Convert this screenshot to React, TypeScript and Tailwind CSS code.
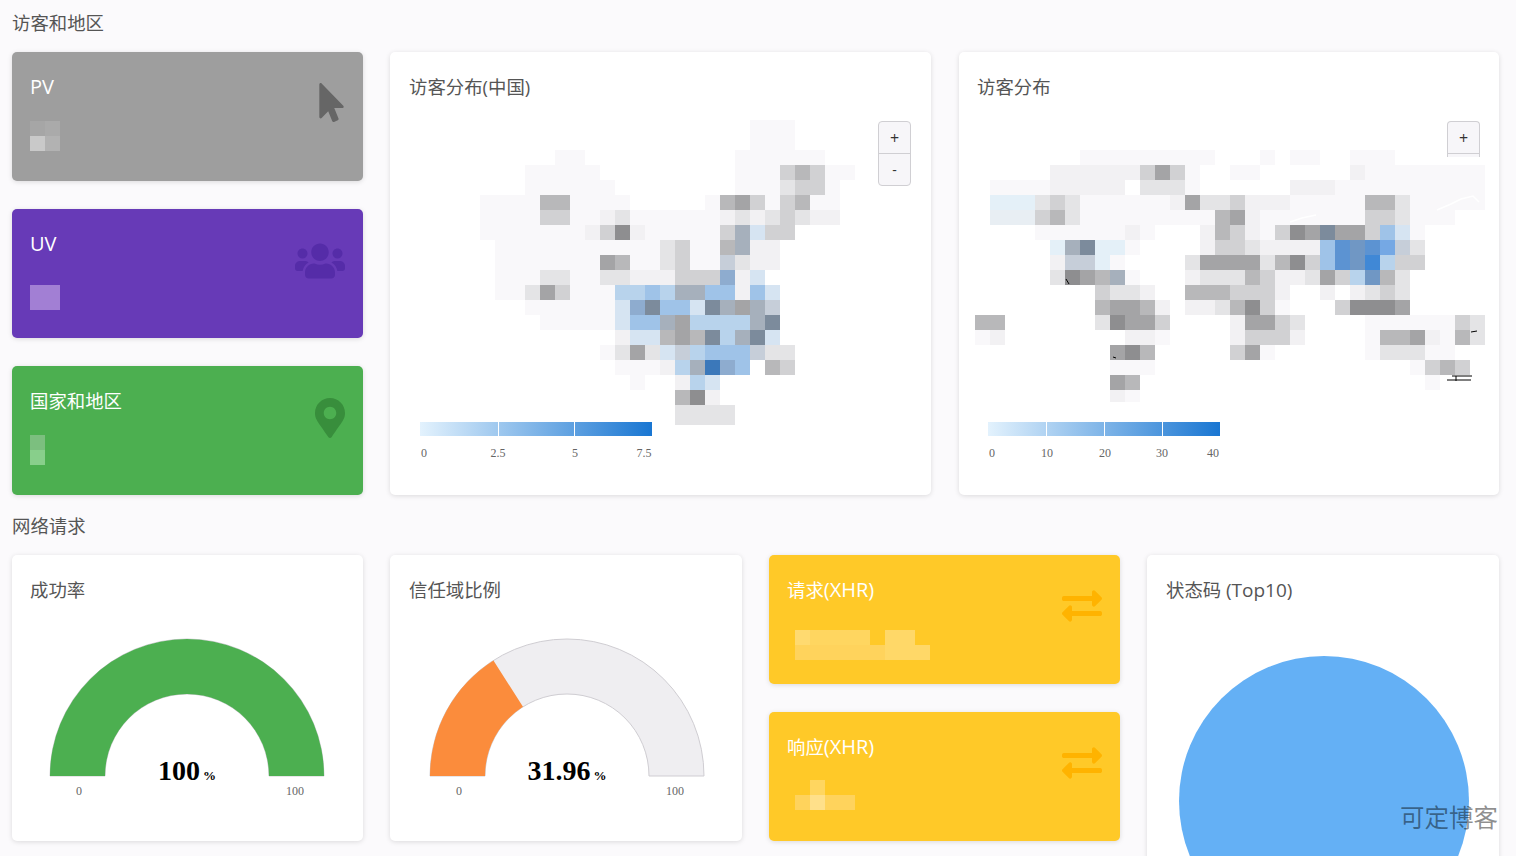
import { FaMousePointer, FaUsers, FaMapMarkerAlt, FaExchangeAlt } from "react-icons/fa";
import type { ReactNode } from "react";

const P: Record<string, string> = {
  a: "#f9f8fa", b: "#f2f1f3", c: "#e4e4e6", d: "#d1d1d3", e: "#b8b8ba", f: "#a4a4a6", g: "#8e8e90",
  h: "#d6e4f2", i: "#b8d3ec", j: "#9fc3e8", k: "#8eaccf", l: "#a6b0bc", m: "#7c8b9c", n: "#3a78ba",
  o: "#5b93d2", p: "#c6ced9", q: "#e4f0f8", r: "#e8eef3", s: "#7097c4", x: "#74a8e4", y: "#3f88d6",
  A: "#a6a6a6", B: "#aaaaaa", C: "#c9c9c9", D: "#b2b2b2", E: "#a27fd4", F: "#9b78cf",
  G: "#7cbf7f", H: "#88cf8b", I: "#ffda70", J: "#ffd660", K: "#ffd35c", L: "#ffd868", M: "#ffe08a",
};

const china = [
  "..................aaa....",
  "..................aaa....",
  ".....aa..........aaaaaa..",
  "...aaaaa.........aaadedaa",
  "...aaaaaa........aaacdda.",
  "aaaaeeaaaa.....aefdadeaa.",
  "aaaaddaabcaaaaaabcbcdcbb.",
  "aaaaaaabdgbaaaaadlhdd....",
  ".aaaaaaaaaaacdaaelbb.....",
  ".aaaaaaafeaacdaapcbb.....",
  ".aaaccaaccbbbdddkbh......",
  ".aacfdaaaiijilljjbjh.....",
  "...aaaaaahkmjjhmlflp.....",
  "....aaaaahjjlfiiiilm.....",
  ".........bhhefemilmh.....",
  "........acfchpijjjpcc....",
  ".........aaabilnkj.ed....",
  "..........a..bih.........",
  ".............egb.........",
  ".............cccc........",
  ".............cccc........",
];

const world = [
  ".......aaaaaaaaa...a.aa..aaa......",
  ".....bbbbbbdfda..aa......baaaaaaaa",
  ".aaaabbbbb.ccca......bbbaaaaaaaaaa",
  ".qqqcdcaaaaaabfccdbbbaaaaaeecaaaaa",
  ".rrrdecaaaaaaaaaefbaaaaaaaddcaaa..",
  "....aaaaaaba...bedbadgfmffdjha....",
  ".....qlmqqa....bddcbbbbjosoxpc....",
  ".....bppqa....cffffcegdjosyidd....",
  ".....cgfela...bcccedbbcfdisec.....",
  "........dccb..eeedddb..b.bcdc.....",
  "........effeb.bbcegda...dgggf.....",
  "ee......cgffd....bffdc....aaaaaadc",
  "ab........bba....bdddb....aeefbaec",
  ".........fge.....dfa......acccaa..",
  ".........aaa.................aded.",
  ".........fe...................a...",
  ".........ba.......................",
];

function Mosaic({ x, y, rows }: { x: number; y: number; rows: string[] }) {
  return (
    <g filter="url(#soft)">
      {rows.map((row, r) =>
        row.split("").map((ch, c) =>
          P[ch] ? <rect key={`${r}-${c}`} x={x + c * 15} y={y + r * 15} width={15} height={15} fill={P[ch]} shapeRendering="crispEdges" /> : null
        )
      )}
    </g>
  );
}

function Value({ rows, w, h, className }: { rows: string[]; w: number; h: number; className?: string }) {
  return (
    <svg width={w} height={h} viewBox={`0 0 ${w} ${h}`} className={`block ${className ?? ""}`}>
      <Mosaic x={0} y={0} rows={rows} />
    </svg>
  );
}

const CARD = "rounded-[5px] shadow-[0_1px_5px_rgba(0,0,0,0.13)]";
const TITLE = "text-[18.4px] leading-[27px] h-[27px]";
const LAT = "text-[20px]";

function Stat({ title, bg, icon, children }: { title: ReactNode; bg: string; icon: ReactNode; children: ReactNode }) {
  return (
    <div className={`${CARD} ${bg} h-[129px] px-[18px] pt-[21px] flex justify-between text-white`}>
      <div>
        <div className={TITLE}>{title}</div>
        {children}
      </div>
      {icon}
    </div>
  );
}

function Legend({ id, ticks, labels }: { id: string; ticks: number[]; labels: [string, number][] }) {
  const x0 = ticks[0];
  const x1 = ticks[ticks.length - 1];
  return (
    <g>
      <defs>
        <linearGradient id={id}>
          <stop offset="0" stopColor="#e3f2fd" />
          <stop offset="1" stopColor="#1976d2" />
        </linearGradient>
      </defs>
      <rect x={x0} y={422} width={x1 - x0} height={14} fill={`url(#${id})`} />
      {ticks.slice(1, -1).map((t) => (
        <rect key={t} x={t} y={422} width={1} height={14} fill="#ffffff" />
      ))}
      {labels.map(([s, x]) => (
        <text key={s} x={x} y={457} textAnchor="middle" fontSize={12} fill="#666666" className="font-['Liberation_Serif',serif]">
          {s}
        </text>
      ))}
    </g>
  );
}

function Gauge({ left, cx, value, color, val, l0, l1 }: { left: number; cx: number; value: number; color: string; val: string; l0: number; l1: number }) {
  const cy = 776;
  const R = 137;
  const r = 82;
  const a = (Math.PI * value) / 100;
  const ox = cx - R * Math.cos(a);
  const oy = cy - R * Math.sin(a);
  const ix = cx - r * Math.cos(a);
  const iy = cy - r * Math.sin(a);
  return (
    <svg width={352} height={190} viewBox={`${left} 625 352 190`} className="block mt-[22px]">
      <path
        d={`M${cx - R} ${cy}A${R} ${R} 0 0 1 ${cx + R} ${cy}H${cx + r}A${r} ${r} 0 0 0 ${cx - r} ${cy}Z`}
        fill="#efeef1"
        stroke="#cfcdd2"
        strokeWidth={1}
      />
      <path d={`M${cx - R} ${cy}A${R} ${R} 0 0 1 ${ox} ${oy}L${ix} ${iy}A${r} ${r} 0 0 0 ${cx - r} ${cy}Z`} fill={color} />
      <text x={cx} y={780} textAnchor="middle" fill="#000000" fontWeight={700} fontSize={28} className="font-['Liberation_Serif',serif]">
        {val}
        <tspan fontSize={13} dx={3}>%</tspan>
      </text>
      <text x={l0} y={795} textAnchor="middle" fontSize={12} fill="#666666" className="font-['Liberation_Serif',serif]">0</text>
      <text x={l1} y={795} textAnchor="middle" fontSize={12} fill="#666666" className="font-['Liberation_Serif',serif]">100</text>
    </svg>
  );
}

export default function App() {
  return (
    <div className="relative h-[856px] overflow-hidden bg-[#fbfafc] pl-3 text-[#555555] font-['Open_Sans','Noto_Sans_CJK_SC',sans-serif]">
      <svg width={0} height={0} className="absolute">
        <defs>
          <filter id="soft" x="-5%" y="-5%" width="110%" height="110%">
            <feGaussianBlur stdDeviation="0.6" />
          </filter>
        </defs>
      </svg>
      <div className={`${TITLE} mt-[9px]`}>访客和地区</div>
      <div className="mt-4 grid grid-cols-[351px_541px_540px] gap-x-[27px]">
        <div className="flex flex-col gap-[28px]">
          <Stat title={<span className={LAT}>PV</span>} bg="bg-[#9e9e9e]" icon={<FaMousePointer className="mt-[10px] -mr-[6px] text-[39px] text-[#666666]" />}>
            <Value rows={["AB", "CD"]} w={30} h={30} className="mt-[21px]" />
          </Stat>
          <Stat title={<span className={LAT}>UV</span>} bg="bg-[#673ab7]" icon={<FaUsers className="mt-[6px] text-[50px] text-[#552ca8]" />}>
            <Value rows={["EE", "EE"]} w={30} h={25} className="mt-[28px]" />
          </Stat>
          <Stat title="国家和地区" bg="bg-[#4caf50]" icon={<FaMapMarkerAlt className="mt-[11px] -mr-[5px] text-[40px] text-[#388e3c]" />}>
            <Value rows={["G", "H"]} w={15} h={30} className="mt-[21px]" />
          </Stat>
        </div>

        <div className={`${CARD} relative bg-white h-[443px] pt-[21px]`}>
          <div className={`${TITLE} px-[19px]`}>访客分布(中国)</div>
          <svg width={541} height={342} viewBox="390 120 541 342" className="block mt-[20px]">
            <Mosaic x={480} y={120} rows={china} />
            <rect x={660} y={425} width={90} height={14} fill="#ffffff" />
            <Legend id="gc" ticks={[420, 498, 574, 652]} labels={[["0", 424], ["2.5", 498], ["5", 575], ["7.5", 644]]} />
          </svg>
          <div className="absolute top-[69px] right-[20px] w-[33px] h-[65px] flex flex-col rounded-[4px] border border-[#d0cfd3] bg-[#f7f6f9] text-[#333333]">
            <div className="h-[32px] flex items-center justify-center text-[16px] border-b border-[#d0cfd3]">+</div>
            <div className="flex-1 flex items-center justify-center text-[14px]">-</div>
          </div>
        </div>

        <div className={`${CARD} relative ml-px -mr-px bg-white h-[443px] pt-[21px]`}>
          <div className={`${TITLE} px-[18px]`}>访客分布</div>
          <div className="absolute top-[69px] right-[19px] w-[33px] h-[36px] rounded-t-[4px] border border-b-0 border-[#d0cfd3] bg-[#f7f6f9] text-[#333333]">
            <div className="h-[32px] flex items-center justify-center text-[16px] border-b border-[#d0cfd3]">+</div>
          </div>
          <svg width={540} height={342} viewBox="959 120 540 342" className="block mt-[20px] relative">
            <Mosaic x={975} y={150} rows={world} />
            <rect x={1100} y={402} width={60} height={6} fill="#ffffff" />
            <path d="M1066 279l3 5M1113 357l3 1M1471 332l6-1M1447 380h24M1452 376h20M1456 376v5" stroke="#000000" strokeWidth={1} fill="none" />
            <path d="M1290 222l12-4 14-3M1437 210l14-6 10-5 12-3 6 6" stroke="#ffffff" strokeWidth={1.5} fill="none" />
            <Legend id="gw" ticks={[988, 1046, 1104, 1162, 1220]} labels={[["0", 992], ["10", 1047], ["20", 1105], ["30", 1162], ["40", 1213]]} />
          </svg>
        </div>
      </div>

      <div className={`${TITLE} mt-[17px]`}>网络请求</div>
      <div className="mt-4 grid grid-cols-[351px_352px_351px_352px] gap-x-[27px] items-start">
        <div className={`${CARD} bg-white h-[286px] pt-[21px]`}>
          <div className={`${TITLE} px-[18px]`}>成功率</div>
          <Gauge left={12} cx={187} value={100} color="#4caf50" val="100" l0={79} l1={295} />
        </div>
        <div className={`${CARD} bg-white h-[286px] pt-[21px]`}>
          <div className={`${TITLE} px-[19px]`}>信任域比例</div>
          <Gauge left={390} cx={567} value={31.96} color="#fb8c3c" val="31.96" l0={459} l1={675} />
        </div>
        <div className="flex flex-col gap-[28px]">
          <Stat title={<>请求<span className={LAT}>(XHR)</span></>} bg="bg-[#ffc928]" icon={<FaExchangeAlt className="mt-[10px] text-[40px] text-[#ffb300]" />}>
            <Value rows={["IJJJJ.LL.", "KKKKKKLLL"]} w={135} h={30} className="mt-[27px] ml-[8px]" />
          </Stat>
          <Stat title={<>响应<span className={LAT}>(XHR)</span></>} bg="bg-[#ffc928]" icon={<FaExchangeAlt className="mt-[10px] text-[40px] text-[#ffb300]" />}>
            <Value rows={[".J..", "KMKK"]} w={60} h={30} className="mt-[20px] ml-[8px]" />
          </Stat>
        </div>
        <div className={`${CARD} bg-white h-[420px] pt-[21px]`}>
          <div className={`${TITLE} px-[19px]`}>状态码 <span className="text-[19px]">(Top10)</span></div>
          <svg width={352} height={300} viewBox="1147 640 352 300" className="block mt-[37px]">
            <circle cx={1324} cy={801} r={145} fill="#64b0f5" />
          </svg>
        </div>
      </div>

      <div className="absolute left-[1400px] top-[800px] text-[24.5px] leading-[36px] text-black/45">可定博客</div>
    </div>
  );
}
